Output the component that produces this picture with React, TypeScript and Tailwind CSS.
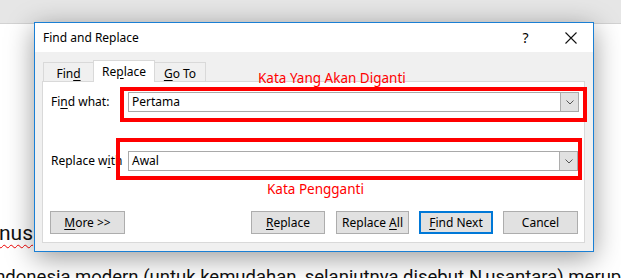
export default function App() {
  return (
    <div className="relative w-[621px] h-[278px] overflow-hidden bg-white">
      <div className="h-[24px] bg-[#e6e6e6] border-b border-[#d2d2d2]" />
      <div className="font-['Roboto',sans-serif] text-[18.5px] leading-[24px] text-[#111]">
        <div className="mt-[197px] -ml-[1px] whitespace-nowrap text-[21px]">
          <span className="underline decoration-wavy decoration-[#e00] decoration-1 underline-offset-[4px]">nus</span>
        </div>
        <div className="mt-[20px] flex whitespace-nowrap">
          <div className="flex w-[469px] shrink-0 justify-end overflow-hidden">
            <span className="shrink-0 pr-[5px]">Indonesia modern (untuk kemudahan, selanjutnya disebut</span>
          </div>
          <span>N</span>
          <span className="w-px h-[22px] bg-black ml-[2px] mr-[1px] mt-[-6px]" />
          <span>usantara) merupakan</span>
        </div>
      </div>

      {/* Dialog */}
      <div className="absolute left-[34px] top-[22px] w-[560px] h-[230px] border border-[#1a7fd4] bg-[#f0f0f0] flex flex-col shadow-[0_6px_26px_rgba(0,0,0,0.4)] font-['Noto_Sans',sans-serif] text-[12px] text-black">
        <div className="h-[29px] bg-white flex items-center shrink-0">
          <span className="pl-[8px]">Find and Replace</span>
          <div className="ml-auto flex h-full">
            <div className="w-[45px] flex items-center justify-center text-[14px]">?</div>
            <div className="w-[45px] flex items-center justify-center">
              <svg width="12" height="12" viewBox="0 0 12 12">
                <path d="M0.5 0.5 L11.5 11.5 M11.5 0.5 L0.5 11.5" stroke="#111" strokeWidth="1.1" fill="none" />
              </svg>
            </div>
          </div>
        </div>
        <div className="flex-1 flex flex-col pl-[7px] pr-[8px] pt-[8px] pb-[8px]">
          <div className="h-[21px] flex items-end pl-px relative z-10">
            <div className="w-[51px] h-[19px] border border-b-0 border-[#d9d9d9] bg-[#f0f0f0] flex items-center justify-center pt-[3px]">
              <span>
                Fin<span className="underline underline-offset-[2px]">d</span>
              </span>
            </div>
            <div className="-ml-px w-[62px] h-[22px] -mb-px border border-b-0 border-[#d9d9d9] bg-white flex items-center justify-center pt-[1px]">
              <span>
                Re<span className="underline underline-offset-[2px]">p</span>lace
              </span>
            </div>
            <div className="-ml-px w-[52px] h-[19px] border border-b-0 border-[#d9d9d9] bg-[#f0f0f0] flex items-center justify-center pt-[3px]">
              <span>
                <span className="underline underline-offset-[2px]">G</span>o To
              </span>
            </div>
          </div>
          <div className="h-[162px] border border-[#d9d9d9] bg-white flex flex-col pl-[8px] pr-[5px] pt-[10px]">
            <div className="flex items-center h-[20px]">
              <span className="w-[77px] shrink-0">
                Fi<span className="underline underline-offset-[2px]">n</span>d what:
              </span>
              <div className="flex-1 h-[20px] flex border border-[#a9a9a9] bg-white">
                <span className="flex-1 pl-[3px] leading-[18px]">Pertama</span>
                <div className="w-[18px] h-full bg-[#e1e1e1] border-l border-[#adadad] flex items-center justify-center">
                  <svg width="8" height="5" viewBox="0 0 8 5">
                    <path d="M0.5 0.5 L4 4 L7.5 0.5" stroke="#555" strokeWidth="1" fill="none" />
                  </svg>
                </div>
              </div>
            </div>
            <div className="flex items-center h-[20px] mt-[39px]">
              <span className="w-[77px] shrink-0 whitespace-nowrap">
                Replace w<span className="underline underline-offset-[2px]">i</span>th
              </span>
              <div className="flex-1 h-[20px] flex border border-[#a9a9a9] bg-white mr-px">
                <span className="flex-1 pl-[3px] leading-[18px]">Awal</span>
                <div className="w-[18px] h-full bg-[#e1e1e1] border-l border-[#adadad] flex items-center justify-center">
                  <svg width="8" height="5" viewBox="0 0 8 5">
                    <path d="M0.5 0.5 L4 4 L7.5 0.5" stroke="#555" strokeWidth="1" fill="none" />
                  </svg>
                </div>
              </div>
            </div>
            <div className="flex h-[23px] mt-[40px]">
              <div className="-ml-px w-[75px] h-full border border-[#adadad] bg-[#e1e1e1] flex items-center justify-center">
                <span>
                  <span className="underline underline-offset-[2px]">M</span>ore &gt;&gt;
                </span>
              </div>
              <div className="ml-auto mr-px flex h-full">
                <div className="w-[74px] h-full border border-[#adadad] bg-[#e1e1e1] flex items-center justify-center mr-[11px]">
                  <span>
                    <span className="underline underline-offset-[2px]">R</span>eplace
                  </span>
                </div>
                <div className="w-[73px] h-full border border-[#adadad] bg-[#e1e1e1] flex items-center justify-center mr-[10px]">
                  <span>
                    Replace <span className="underline underline-offset-[2px]">A</span>ll
                  </span>
                </div>
                <div className="w-[74px] h-full border-2 border-[#0078d7] bg-[#e1e1e1] flex items-center justify-center mr-[10px]">
                  <span>
                    <span className="underline underline-offset-[2px]">F</span>ind Next
                  </span>
                </div>
                <div className="w-[75px] h-full border border-[#adadad] bg-[#e1e1e1] flex items-center justify-center">
                  <span>Cancel</span>
                </div>
              </div>
            </div>
          </div>
        </div>
      </div>

      {/* Annotations */}
      <div className="absolute left-[120px] top-[87px] w-[467px] h-[35px] border-4 border-[#ff0000]" />
      <div className="absolute left-[116px] top-[138px] w-[466px] h-[42px] border-4 border-[#ff0000]" />
      <div className="absolute left-[258px] top-[71px] font-['Noto_Sans',sans-serif] text-[13.5px] leading-[14px] text-[#ff0000] whitespace-nowrap">
        Kata Yang Akan Diganti
      </div>
      <div className="absolute left-[267px] top-[182px] font-['Noto_Sans',sans-serif] text-[13.5px] leading-[14px] text-[#ff0000] whitespace-nowrap">
        Kata Pengganti
      </div>
    </div>
  );
}
